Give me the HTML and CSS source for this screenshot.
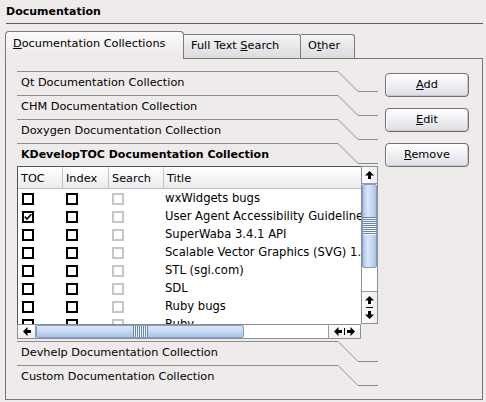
FILE: index.html
```html
<!DOCTYPE html>
<html>
<head>
<meta charset="utf-8">
<link rel="stylesheet" href="styles.css">
</head>
<body>
<div class="title">Documentation</div>
<div class="tabs">
  <div class="tab active"><u>D</u>ocumentation Collections</div>
  <div class="tab fts">Full Text <u>S</u>earch</div>
  <div class="tab oth">O<u>t</u>her</div>
</div>
<div class="panel">
  <div class="toolbox">
    <div class="tb-head"><div class="tb-label">Qt Documentation Collection</div><svg class="tb-diag" width="20" height="24"><line x1="0" y1="0.5" x2="20" y2="20.5"/></svg><div class="tb-tail"></div></div>
    <div class="tb-head"><div class="tb-label">CHM Documentation Collection</div><svg class="tb-diag" width="20" height="24"><line x1="0" y1="0.5" x2="20" y2="20.5"/></svg><div class="tb-tail"></div></div>
    <div class="tb-head"><div class="tb-label">Doxygen Documentation Collection</div><svg class="tb-diag" width="20" height="24"><line x1="0" y1="0.5" x2="20" y2="20.5"/></svg><div class="tb-tail"></div></div>
    <div class="tb-head sel"><div class="tb-label">KDevelopTOC Documentation Collection</div><svg class="tb-diag" width="20" height="24"><line x1="0" y1="0.5" x2="20" y2="20.5"/></svg><div class="tb-tail"></div></div>
    <div class="tb-page">
      <div class="lv">
        <div class="lv-view">
          <div class="lv-head"><div>TOC</div><div>Index</div><div>Search</div><div class="last">Title</div></div>
          <div class="lv-row"><span class="cb c1"></span><span class="cb c2"></span><span class="cb c3 dis"></span><span class="t">wxWidgets bugs</span></div>
          <div class="lv-row"><span class="cb c1"><svg width="8" height="8" viewBox="0 0 8 8"><path d="M0.8 3.6 L3 6 L7.4 1.2" /></svg></span><span class="cb c2"></span><span class="cb c3 dis"></span><span class="t">User Agent Accessibility Guidelines</span></div>
          <div class="lv-row"><span class="cb c1"></span><span class="cb c2"></span><span class="cb c3 dis"></span><span class="t">SuperWaba 3.4.1 API</span></div>
          <div class="lv-row"><span class="cb c1"></span><span class="cb c2"></span><span class="cb c3 dis"></span><span class="t">Scalable Vector Graphics (SVG) 1.1</span></div>
          <div class="lv-row"><span class="cb c1"></span><span class="cb c2"></span><span class="cb c3 dis"></span><span class="t">STL (sgi.com)</span></div>
          <div class="lv-row"><span class="cb c1"></span><span class="cb c2"></span><span class="cb c3 dis"></span><span class="t">SDL</span></div>
          <div class="lv-row"><span class="cb c1"></span><span class="cb c2"></span><span class="cb c3 dis"></span><span class="t">Ruby bugs</span></div>
          <div class="lv-row"><span class="cb c1"></span><span class="cb c2"></span><span class="cb c3 dis"></span><span class="t">Ruby</span></div>
        </div>
        <div class="vsb">
          <div class="sb-btn up"><svg width="9" height="8" viewBox="0 0 9 8"><polygon points="4.5,0 9,4.5 6,4.5 6,8 3,8 3,4.5 0,4.5"/></svg></div>
          <div class="vthumb"><div class="vgrip"></div></div>
          <div class="trough"></div>
          <div class="sb-btn vdbl">
            <svg width="9" height="8" viewBox="0 0 9 8"><polygon points="4.5,0 9,4.5 6,4.5 6,8 3,8 3,4.5 0,4.5"/></svg>
            <span class="hsep"></span>
            <svg width="9" height="8" viewBox="0 0 9 8"><polygon points="4.5,8 9,3.5 6,3.5 6,0 3,0 3,3.5 0,3.5"/></svg>
          </div>
        </div>
        <div class="hsb">
          <div class="sb-btn left"><svg width="8" height="9" viewBox="0 0 8 9"><polygon points="0,4.5 4.5,0 4.5,3 8,3 8,6 4.5,6 4.5,9"/></svg></div>
          <div class="hthumb"><div class="hgrip"></div></div>
          <div class="trough"></div>
          <div class="sb-btn hdbl">
            <svg width="8" height="9" viewBox="0 0 8 9"><polygon points="0,4.5 4.5,0 4.5,3 8,3 8,6 4.5,6 4.5,9"/></svg>
            <span class="vsep"></span>
            <svg width="8" height="9" viewBox="0 0 8 9"><polygon points="8,4.5 3.5,0 3.5,3 0,3 0,6 3.5,6 3.5,9"/></svg>
          </div>
        </div>
      </div>
    </div>
    <div class="tb-head"><div class="tb-label">Devhelp Documentation Collection</div><svg class="tb-diag" width="20" height="24"><line x1="0" y1="0.5" x2="20" y2="20.5"/></svg><div class="tb-tail"></div></div>
    <div class="tb-head"><div class="tb-label">Custom Documentation Collection</div><svg class="tb-diag" width="20" height="24"><line x1="0" y1="0.5" x2="20" y2="20.5"/></svg><div class="tb-tail"></div></div>
  </div>
  <div class="btns">
    <div class="btn"><u>A</u>dd</div>
    <div class="btn"><u>E</u>dit</div>
    <div class="btn"><u>R</u>emove</div>
  </div>
</div>
</body>
</html>
```
FILE: styles.css
```css
body {
  margin: 0;
  width: 486px;
  height: 402px;
  overflow: hidden;
  background: #efebeb;
  font-family: "DejaVu Sans", sans-serif;
  font-size: 11.3px;
  color: #000;
}

.title {
  margin: 0 3px 0 6px;
  padding-top: 5px;
  height: 18px;
  line-height: 13px;
  font-size: 11px;
  font-weight: bold;
  border-bottom: 1px solid #5e5e5e;
}

.tabs {
  display: flex;
  align-items: flex-end;
  height: 27px;
  margin: 7px 0 0 5px;
}

.tab {
  box-sizing: border-box;
  height: 24px;
  padding: 0 0 0 7px;
  line-height: 22px;
  border: 1px solid #7a7a7a;
  border-left: 0;
  border-bottom: 0;
  border-radius: 0 3px 0 0;
  background: linear-gradient(#f4f4f6, #dcdbe0);
  white-space: nowrap;
}

.tab.active {
  width: 179px;
  height: 28px;
  margin-bottom: -1px;
  padding-top: 1px;
  border-left: 1px solid #7a7a7a;
  border-radius: 4px 4px 0 0;
  background: linear-gradient(#fcfcfc, #efebeb 75%);
  position: relative;
  z-index: 1;
}

.tab.fts { width: 117px; }
.tab.oth { width: 54px; }

.panel {
  box-sizing: border-box;
  margin-left: 5px;
  width: 478px;
  height: 342px;
  border: 1px solid #777;
  display: flex;
  gap: 7px;
  padding: 12px 13px 0 11px;
}

.toolbox {
  width: 361px;
  display: flex;
  flex-direction: column;
}

.tb-head {
  display: flex;
  height: 24px;
  flex: none;
}

.tb-label {
  flex: 1;
  border-top: 1px solid #8c8c8c;
  padding-left: 4px;
  line-height: 22px;
  white-space: nowrap;
}

.tb-head.sel .tb-label {
  font-weight: bold;
  font-size: 11px;
}

.tb-diag {
  flex: none;
  display: block;
}

.tb-diag line {
  stroke: #8c8c8c;
  stroke-width: 1;
}

.tb-tail {
  flex: none;
  box-sizing: border-box;
  width: 20px;
  height: 21px;
  border-bottom: 1px solid #8c8c8c;
}

.tb-page {
  flex: none;
  height: 175px;
  margin-top: -1px;
}

.lv {
  display: grid;
  grid-template-columns: 344px 17px;
  grid-template-rows: 158px 15px;
}

.lv-view {
  box-sizing: border-box;
  border-left: 1px solid #555;
  border-top: 1px solid #555;
  background: #fff;
  overflow: hidden;
}

.lv-head {
  display: grid;
  grid-template-columns: 45px 46px 55px 1fr;
  box-sizing: border-box;
  height: 22px;
  border-bottom: 1px solid #bdbdbd;
  background: linear-gradient(#ffffff, #ebebee);
}

.lv-head > div {
  border-right: 1px solid #c4c4c4;
  padding: 2px 0 0 3px;
  line-height: 19px;
  white-space: nowrap;
}

.lv-head > div.last { border-right: 0; }

.lv-row {
  display: grid;
  grid-template-columns: 45px 46px 55px 1fr;
  height: 18px;
  line-height: 18px;
  white-space: nowrap;
}

.cb {
  display: block;
  box-sizing: border-box;
  width: 12px;
  height: 12px;
  margin-top: 4px;
  border: 2px solid #000;
  background: #fff;
}

.cb svg {
  display: block;
}

.cb path {
  fill: none;
  stroke: #000;
  stroke-width: 1.7;
}

.cb.c1 { margin-left: 4px; }
.cb.c2 { margin-left: 3px; }
.cb.c3 { margin-left: 3px; }
.cb.dis { border-color: #c6c6c6; }

.t {
  padding-left: 1px;
  font-size: 11.6px;
}

.sb-btn {
  flex: none;
  display: flex;
  align-items: center;
  justify-content: center;
  background: linear-gradient(to right, #ffffff, #eceef2);
}

.sb-btn polygon { fill: #000; }
.sb-btn svg { display: block; }

.vsb {
  box-sizing: border-box;
  border: 1px solid #8e8e8e;
  background: #fff;
  display: flex;
  flex-direction: column;
}

.vsb .up {
  height: 16px;
  border-bottom: 1px solid #9a9a9a;
}

.vthumb {
  flex: none;
  box-sizing: border-box;
  height: 84px;
  border: 1px solid #7d9bcf;
  border-radius: 2px;
  background: linear-gradient(to right, #aac2e8, #d9e6f8 35%, #c6d8f2 70%, #a9c1e8);
  display: flex;
  align-items: center;
  justify-content: center;
}

.vgrip {
  width: 13px;
  height: 18px;
  background: repeating-linear-gradient(to bottom, #6685b3 0 1px, #f4f8fd 1px 2px);
}

.trough {
  flex: 1;
  background: #fff;
}

.vsb .vdbl {
  height: 31px;
  border-top: 1px solid #9a9a9a;
  flex-direction: column;
  gap: 3px;
}

.hsep {
  display: block;
  width: 7px;
  height: 1px;
  background: #000;
}

.hsb {
  box-sizing: border-box;
  border: 1px solid #8e8e8e;
  background: #fff;
  display: flex;
}

.hsb .sb-btn {
  background: linear-gradient(#ffffff, #eceef2);
}

.hsb .left {
  width: 17px;
  border-right: 1px solid #9a9a9a;
}

.hthumb {
  flex: none;
  box-sizing: border-box;
  width: 208px;
  border: 1px solid #7d9bcf;
  border-radius: 2px;
  background: linear-gradient(#d9e6f8, #c6d8f2 50%, #a9c1e8);
  display: flex;
  align-items: center;
  justify-content: center;
}

.hgrip {
  width: 15px;
  height: 100%;
  background: repeating-linear-gradient(to right, #6685b3 0 1px, #f4f8fd 1px 2px);
}

.hsb .hdbl {
  width: 31px;
  border-left: 1px solid #9a9a9a;
  gap: 2px;
}

.vsep {
  display: block;
  width: 1px;
  height: 7px;
  background: #000;
}

.btns {
  width: 84px;
  display: flex;
  flex-direction: column;
  gap: 11px;
  padding-top: 2px;
}

.btn {
  box-sizing: border-box;
  height: 24px;
  border: 1px solid #707070;
  border-radius: 4px;
  text-align: center;
  line-height: 22px;
  background: linear-gradient(#ffffff, #f3f3f6 40%, #dcdce4);
  box-shadow: inset 1px 0 0 #fff, inset -1px 0 0 #c8c8d0, inset 0 -1px 0 #c8c8d0;
}
```
